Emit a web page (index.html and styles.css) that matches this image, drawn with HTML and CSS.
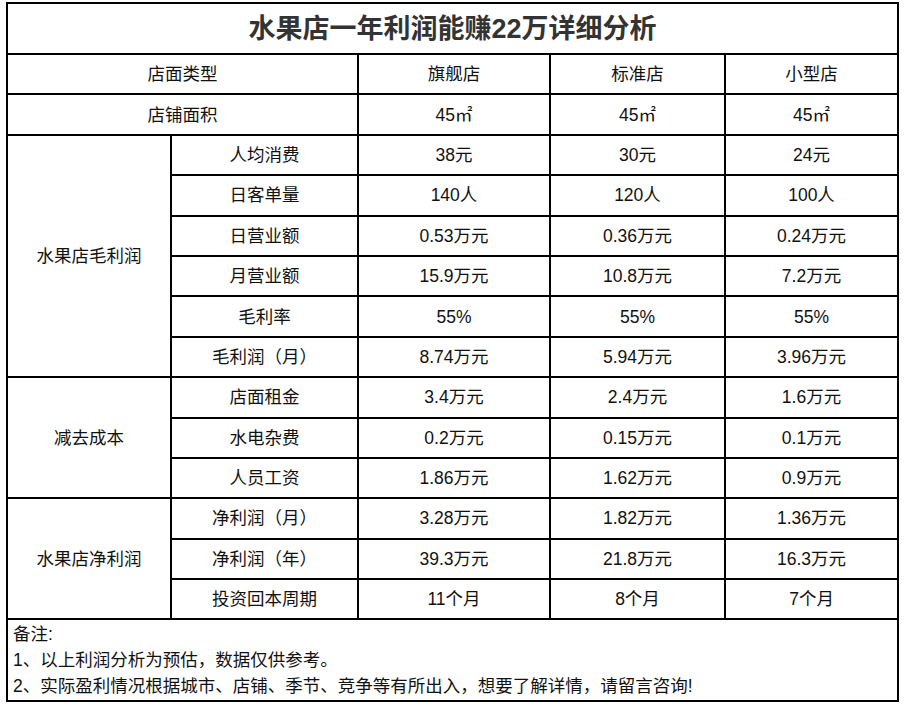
FILE: index.html
```html
<!DOCTYPE html>
<html lang="zh-CN">
<head>
<meta charset="utf-8">
<title>水果店一年利润能赚22万详细分析</title>
<link rel="stylesheet" href="styles.css">
</head>
<body>
<table class="sheet">
  <colgroup>
    <col class="c-a"><col class="c-b"><col class="c-c"><col class="c-d"><col class="c-e">
  </colgroup>
  <tr class="r-title"><td colspan="5" class="title">水果店一年利润能赚22万详细分析</td></tr>
  <tr class="r"><td colspan="2">店面类型</td><td>旗舰店</td><td>标准店</td><td>小型店</td></tr>
  <tr class="r"><td colspan="2">店铺面积</td><td>45㎡</td><td>45㎡</td><td>45㎡</td></tr>
  <tr class="r"><td rowspan="6">水果店毛利润</td><td>人均消费</td><td>38元</td><td>30元</td><td>24元</td></tr>
  <tr class="r"><td>日客单量</td><td>140人</td><td>120人</td><td>100人</td></tr>
  <tr class="r"><td>日营业额</td><td>0.53万元</td><td>0.36万元</td><td>0.24万元</td></tr>
  <tr class="r"><td>月营业额</td><td>15.9万元</td><td>10.8万元</td><td>7.2万元</td></tr>
  <tr class="r"><td>毛利率</td><td>55%</td><td>55%</td><td>55%</td></tr>
  <tr class="r"><td>毛利润（月）</td><td>8.74万元</td><td>5.94万元</td><td>3.96万元</td></tr>
  <tr class="r"><td rowspan="3">减去成本</td><td>店面租金</td><td>3.4万元</td><td>2.4万元</td><td>1.6万元</td></tr>
  <tr class="r"><td>水电杂费</td><td>0.2万元</td><td>0.15万元</td><td>0.1万元</td></tr>
  <tr class="r"><td>人员工资</td><td>1.86万元</td><td>1.62万元</td><td>0.9万元</td></tr>
  <tr class="r"><td rowspan="3">水果店净利润</td><td>净利润（月）</td><td>3.28万元</td><td>1.82万元</td><td>1.36万元</td></tr>
  <tr class="r"><td>净利润（年）</td><td>39.3万元</td><td>21.8万元</td><td>16.3万元</td></tr>
  <tr class="r"><td>投资回本周期</td><td>11个月</td><td>8个月</td><td>7个月</td></tr>
  <tr class="r-notes"><td colspan="5" class="notes">
    <div class="note-line">备注:</div>
    <div class="note-line">1、以上利润分析为预估，数据仅供参考。</div>
    <div class="note-line">2、实际盈利情况根据城市、店铺、季节、竞争等有所出入，想要了解详情，请留言咨询!</div>
  </td></tr>
</table>
</body>
</html>
```

FILE: styles.css
```css
html, body {
  margin: 0;
  padding: 0;
  background: #ffffff;
}
body {
  padding: 2px 0 0 6px;
  font-family: "Liberation Sans", "Noto Sans CJK SC", sans-serif;
  color: #111111;
}
.sheet {
  border-collapse: collapse;
  table-layout: fixed;
  width: 893px;
}
.c-a { width: 164px; }
.c-b { width: 187px; }
.c-c { width: 192px; }
.c-d { width: 175px; }
.c-e { width: 173px; }
.sheet td {
  border: 2px solid #000000;
  text-align: center;
  vertical-align: middle;
  font-size: 17.5px;
  line-height: 24px;
  padding: 0;
  white-space: nowrap;
}
.sheet .r-title td { height: 49px; }
.sheet .r td { height: 38.4px; }
.sheet td.title {
  font-size: 27px;
  line-height: 30px;
  font-weight: bold;
  color: #333333;
}
.sheet td.notes {
  text-align: left;
  vertical-align: top;
  padding: 1px 0 0 5px;
  height: 79px;
}
.note-line {
  font-size: 17.5px;
  line-height: 26px;
  height: 26px;
}
```
